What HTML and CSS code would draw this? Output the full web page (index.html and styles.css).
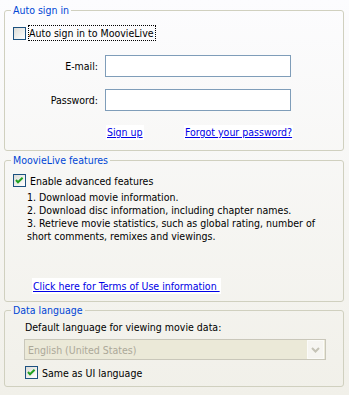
FILE: index.html
```html
<!DOCTYPE html>
<html>
<head>
<meta charset="utf-8">
<link rel="stylesheet" href="styles.css">
</head>
<body>
<div class="page">
  <fieldset class="group g1">
    <legend>Auto sign in</legend>
    <div class="check-row r1">
      <span class="box"></span>
      <span class="lbl focus">Auto sign in to MoovieLive</span>
    </div>
    <div class="form">
      <span class="flabel">E-mail:</span>
      <span class="input"></span>
      <span class="flabel">Password:</span>
      <span class="input"></span>
    </div>
    <div class="links">
      <span class="link-cell"><a class="link">Sign up</a></span>
      <span class="link-cell"><a class="link">Forgot your password?</a></span>
    </div>
  </fieldset>

  <fieldset class="group g2">
    <legend>MoovieLive features</legend>
    <div class="check-row r2">
      <span class="box checked"><svg width="11" height="11" viewBox="0 0 11 11"><polyline points="2,5 4,7.3 8.6,2.7" fill="none" stroke="#21a121" stroke-width="2"/></svg></span>
      <span class="lbl">Enable advanced features</span>
    </div>
    <div class="list">
      1. Download movie information.<br>
      2. Download disc information, including chapter names.<br>
      3. Retrieve movie statistics, such as global rating, number of<br>
      short comments, remixes and viewings.
    </div>
    <div class="terms"><a class="link">Click here for Terms of Use information&nbsp;</a></div>
  </fieldset>

  <fieldset class="group g3">
    <legend>Data language</legend>
    <div class="desc">Default language for viewing movie data:</div>
    <div class="select">
      <span class="sel-text">English (United States)</span>
      <span class="sel-btn"><svg width="9" height="6" viewBox="0 0 9 6"><polyline points="1,1 4.5,4.5 8,1" fill="none" stroke="#c5c3b6" stroke-width="2"/></svg></span>
    </div>
    <div class="check-row r3">
      <span class="box checked"><svg width="11" height="11" viewBox="0 0 11 11"><polyline points="2,5 4,7.3 8.6,2.7" fill="none" stroke="#21a121" stroke-width="2"/></svg></span>
      <span class="lbl">Same as UI language</span>
    </div>
  </fieldset>
</div>
</body>
</html>
```
FILE: styles.css
```css
html, body {
  margin: 0;
  padding: 0;
}
body {
  width: 349px;
  height: 395px;
  background: linear-gradient(#fcfcfe, #f1f0e9);
  font-family: "DejaVu Sans Condensed", "Liberation Sans", Arial, sans-serif;
  font-size: 10.5px;
  color: #000;
  overflow: hidden;
}
.page {
  padding-top: 4px;
}
.group {
  margin: 0 0 0 4px;
  width: 340px;
  box-sizing: border-box;
  border: 1px solid #d0d0bf;
  border-radius: 3px;
  padding: 0;
  min-width: 0;
}
.group legend {
  color: #0046d5;
  line-height: 13px;
  padding: 0 2px;
  margin-left: 6px;
}
.g1 { padding-bottom: 10px; }
.g2 { margin-top: 3px; padding-bottom: 7px; }
.g3 { margin-top: 2px; padding-bottom: 7px; }

.check-row {
  display: flex;
  align-items: center;
}
.box {
  width: 13px;
  height: 13px;
  box-sizing: border-box;
  border: 1px solid #1c5180;
  background: linear-gradient(135deg, #dcdcd7, #ffffff);
  display: block;
  flex: none;
}
.box svg { display: block; }
.r1 { margin: 8px 0 0 8px; height: 16px; }
.r1 .box { margin-top: 1px; }
.lbl.focus {
  margin-left: 2px;
  border: 1px dotted #000;
  line-height: 14px;
  padding: 0 1px 0 0;
}
.r2 { margin: 7px 0 0 8px; height: 13px; }
.r2 .lbl { margin-left: 4px; }
.r3 { margin: 6px 0 0 20px; height: 13px; }
.r3 .lbl { margin-left: 4px; }

.form {
  display: grid;
  grid-template-columns: 93px 186px;
  column-gap: 7px;
  row-gap: 12px;
  margin-top: 14px;
  align-items: center;
}
.flabel { text-align: right; }
.input {
  height: 22px;
  box-sizing: border-box;
  border: 1px solid #7f9db9;
  background: #fff;
}
.links {
  display: grid;
  grid-template-columns: 78px auto;
  margin: 14px 0 0 101px;
  justify-items: start;
}
.link {
  color: #0000e6;
  text-decoration: underline;
  background: #fff;
  line-height: 15px;
  padding: 0 1px;
  display: inline-block;
}
.list {
  margin: 4px 0 0 22px;
  line-height: 13px;
}
.terms {
  margin: 35px 0 0 27px;
}
.terms .link { line-height: 16px; }
.desc {
  margin: 4px 0 0 20px;
  line-height: 13px;
}
.select {
  margin: 5px 0 0 19px;
  width: 302px;
  height: 21px;
  box-sizing: border-box;
  border: 1px solid #c9c7ba;
  background: #ebe9d8;
  display: flex;
  align-items: center;
  justify-content: space-between;
}
.sel-text {
  color: #aca899;
  padding-left: 3px;
}
.sel-btn {
  width: 17px;
  height: 19px;
  box-sizing: border-box;
  margin-right: 1px;
  background: #f6f5f1;
  border: 1px solid #fbfbf8;
  display: flex;
  align-items: center;
  justify-content: center;
}
.sel-btn svg { display: block; }
```
